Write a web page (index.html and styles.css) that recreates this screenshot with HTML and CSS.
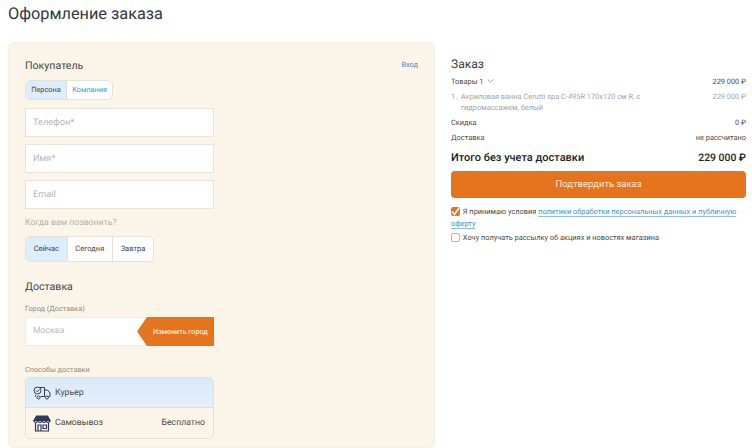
FILE: index.html
```html
<!DOCTYPE html>
<html lang="ru">
<head>
    <meta charset="UTF-8">
    <meta name="viewport" content="width=device-width, initial-scale=1.0">
    <title>Оформление заказа</title>
    <link rel="stylesheet" href="styles.css">
</head>
<body>
    <h1 class="page-title">Оформление заказа</h1>
    <div class="checkout">
        <div class="form-card">
            <div class="card-head">
                <h2 class="block-title">Покупатель</h2>
                <a class="login-link" href="#">Вход</a>
            </div>
            <div class="tabs">
                <span class="tab active">Персона</span>
                <span class="tab link">Компания</span>
            </div>
            <div class="field">Телефон*</div>
            <div class="field">Имя*</div>
            <div class="field">Email</div>
            <div class="call-label">Когда вам позвонить?</div>
            <div class="call-tabs">
                <span class="call-tab active">Сейчас</span>
                <span class="call-tab">Сегодня</span>
                <span class="call-tab">Завтра</span>
            </div>
            <h2 class="block-title delivery-title">Доставка</h2>
            <div class="small-label">Город (Доставка)</div>
            <div class="city">
                <span class="city-name">Москва</span>
                <span class="city-btn">Изменить город</span>
            </div>
            <div class="small-label methods-label">Способы доставки</div>
            <div class="methods">
                <div class="method active">
                    <svg class="method-icon" width="18" height="16" viewBox="0 0 18 16" fill="none" stroke="#2e3a5c" stroke-width="1">
                        <path d="M4 2.500h7.500v9H7.500M3 11.500h-.5V10"/>
                        <path d="M11.500 5h3l2.500 3v3.500h-1.500M11.500 11.500h1"/>
                        <circle cx="5.500" cy="12.500" r="1.500"/>
                        <circle cx="14" cy="12.500" r="1.500"/>
                        <circle cx="4.500" cy="5.500" r="3.500" fill="#deedfb"/>
                        <path d="M3 5.500l1.300 1.300 2-2.300"/>
                    </svg>
                    <span>Курьер</span>
                </div>
                <div class="method">
                    <svg class="method-icon" width="18" height="17" viewBox="0 0 18 17" fill="none" stroke="#2e3a5c" stroke-width="1.200">
                        <path d="M3.500 1h11l2.500 4.500H1z" fill="#2e3a5c"/>
                        <path d="M1 5.500c0 2.500 4 2.500 4 0 0 2.500 4 2.500 4 0 0 2.500 4 2.500 4 0 0 2.500 4 2.500 4 0"/>
                        <path d="M2.500 8v8h13V8"/>
                        <path d="M5 16v-6h3v6M10 10h3.500v3.500H10z"/>
                    </svg>
                    <span>Самовывоз</span>
                    <span class="method-price">Бесплатно</span>
                </div>
            </div>
        </div>

        <div class="order">
            <h2 class="order-title">Заказ</h2>
            <div class="row">
                <span>Товары 1
                    <svg class="chevron" width="7" height="4" viewBox="0 0 8 5" fill="none" stroke="#666" stroke-width="0.800"><path d="M0.500 0.500L4 4l3.500-3.500"/></svg>
                </span>
                <span>229 000 ₽</span>
            </div>
            <div class="row item">
                <span class="item-num">1.</span>
                <span class="item-name">Акриловая ванна Cerutti spa C-495R 170x120 см R, с гидромассажем, белый</span>
                <span>229 000 ₽</span>
            </div>
            <div class="row discount">
                <span>Скидка</span>
                <span>0 ₽</span>
            </div>
            <div class="row shipping">
                <span>Доставка</span>
                <span>не рассчитано</span>
            </div>
            <div class="row total">
                <span class="total-label">Итого без учета доставки</span>
                <span class="total-sum">229 000 ₽</span>
            </div>
            <button class="confirm">Подтвердить заказ</button>
            <p class="agree">
                <span class="check on">
                    <svg width="9" height="9" viewBox="0 0 9 9" fill="none" stroke="#fff" stroke-width="1.600"><path d="M1 4.500l2.500 3L8 1"/></svg>
                </span>
                Я принимаю условия <a href="#">политики обработки персональных данных и публичную оферту</a>
            </p>
            <p class="agree news">
                <span class="check"></span>
                Хочу получать рассылку об акциях и новостях магазина
            </p>
        </div>
    </div>
</body>
</html>
```

FILE: styles.css
```css
* {
    margin: 0;
    padding: 0;
    box-sizing: border-box;
}

html, body {
    height: 448px;
    overflow: hidden;
}

body {
    font-family: "Roboto", "Liberation Sans", sans-serif;
    text-rendering: geometricPrecision;
    background: #fff;
    color: #333;
    padding: 0 6px 0 8px;
}

.page-title {
    font-size: 16.300px;
    font-weight: 400;
    line-height: 20px;
    padding-top: 4px;
    height: 42px;
    color: #2f3640;
}

.checkout {
    display: flex;
    gap: 16px;
    align-items: flex-start;
}

.form-card {
    width: 427px;
    height: 406px;
    flex-shrink: 0;
    background: #fbf5e9;
    border: 1px solid #f5efe3;
    border-radius: 6px;
    padding: 14px 16px;
}

.card-head {
    display: flex;
    justify-content: space-between;
    height: 23px;
}

.block-title {
    font-size: 10.600px;
    font-weight: 400;
    line-height: 18px;
    color: #444;
}

.login-link {
    font-size: 7.400px;
    line-height: 16px;
    color: #4a90c8;
    text-decoration: none;
}

.tabs {
    display: inline-flex;
    height: 20px;
    background: #fff;
    border: 1px solid #e5e2da;
    border-radius: 5px;
    overflow: hidden;
    font-size: 7.300px;
    line-height: 18px;
    margin-bottom: 8px;
    vertical-align: top;
}

.tab {
    padding: 0 5.300px;
    color: #444;
}

.tab.active {
    background: #deedfb;
    border-right: 1px solid #d8dde2;
}

.tab.link {
    color: #4a90c8;
}

.field {
    width: 189px;
    height: 29px;
    background: #fff;
    border: 1px solid #e8e4da;
    margin-bottom: 7px;
    padding-left: 7px;
    font-size: 9.200px;
    line-height: 27px;
    color: #b5b5b5;
}

.call-label {
    font-size: 8.700px;
    line-height: 14px;
    color: #b5b0a6;
    margin-bottom: 6px;
}

.call-tabs {
    display: inline-flex;
    height: 26px;
    background: #fff;
    border: 1px solid #e5e2da;
    border-radius: 5px;
    overflow: hidden;
    font-size: 7.500px;
    line-height: 24px;
    vertical-align: top;
}

.call-tab {
    padding: 0 7.700px;
    border-right: 1px solid #e5e2da;
    color: #444;
}

.call-tab:last-child {
    border-right: 0;
}

.call-tab.active {
    background: #deedfb;
}

.delivery-title {
    margin-top: 16px;
    margin-bottom: 7px;
}

.small-label {
    font-size: 7.300px;
    line-height: 12px;
    color: #8f8a80;
    margin-bottom: 2px;
}

.city {
    display: flex;
    justify-content: space-between;
    width: 189px;
    height: 29px;
    background: #fff;
    border: 1px solid #f0ece2;
    border-right: 0;
    padding-left: 7px;
}

.city-name {
    font-size: 8.700px;
    line-height: 27px;
    color: #b8bcc0;
}

.city-btn {
    width: 77px;
    height: 29px;
    margin-top: -1px;
    padding-left: 16px;
    background: #e5741f;
    color: #fff;
    font-size: 7.200px;
    line-height: 29px;
    white-space: nowrap;
    clip-path: polygon(10px 0, 100% 0, 100% 100%, 10px 100%, 0 50%);
}

.methods-label {
    margin-top: 18px;
    margin-bottom: 1px;
}

.methods {
    width: 189px;
    border: 1px solid #e5e0d4;
    border-radius: 5px;
    overflow: hidden;
}

.method {
    display: flex;
    align-items: center;
    gap: 4px;
    height: 30px;
    padding: 0 8px 0 7px;
    font-size: 8.700px;
    color: #4a4a4a;
}

.method.active {
    background: linear-gradient(#d9e9fb, #e6f0f7);
    border-bottom: 1px solid #e0dfd8;
}

.method-icon {
    flex-shrink: 0;
}

.method-price {
    margin-left: auto;
}

.order {
    flex: 1;
    padding-top: 14px;
    font-size: 7.400px;
    color: #4a4a4a;
}

.order-title {
    font-size: 12px;
    font-weight: 400;
    line-height: 16px;
    color: #3a3a3a;
    margin-bottom: 4px;
}

.row {
    display: flex;
    justify-content: space-between;
    line-height: 12px;
}

.chevron {
    margin-left: 2px;
    vertical-align: 1px;
}

.item {
    margin-top: 3px;
    color: #a5a5a5;
}

.item-num {
    width: 10px;
    flex-shrink: 0;
}

.item-name {
    width: 195px;
    line-height: 11px;
    margin-right: auto;
}

.discount {
    margin-top: 4px;
}

.shipping {
    margin-top: 3px;
}

.total {
    margin-top: 5px;
    color: #222;
    align-items: center;
    height: 18px;
}

.total-label {
    font-size: 11px;
    font-weight: 500;
}

.total-sum {
    font-size: 10.400px;
    font-weight: 500;
}

.confirm {
    display: block;
    width: 100%;
    height: 27px;
    margin-top: 4px;
    background: #e5741f;
    border: 0;
    border-radius: 4px;
    color: #fbe6d4;
    font-family: inherit;
    font-size: 9.500px;
    text-rendering: geometricPrecision;
}

.agree {
    margin-top: 8px;
    font-size: 7.400px;
    line-height: 12px;
}

.agree.news {
    margin-top: 2px;
}

.agree a {
    color: #4a90c8;
    text-decoration: none;
    border-bottom: 1px solid #8fc2e8;
}

.check {
    display: inline-flex;
    align-items: center;
    justify-content: center;
    width: 9px;
    height: 9px;
    margin-right: 1px;
    border: 1px solid #b8b8b8;
    border-radius: 2px;
    background: #fff;
    vertical-align: -1.500px;
}

.check.on {
    border: 0;
    background: #e5741f;
}
```
